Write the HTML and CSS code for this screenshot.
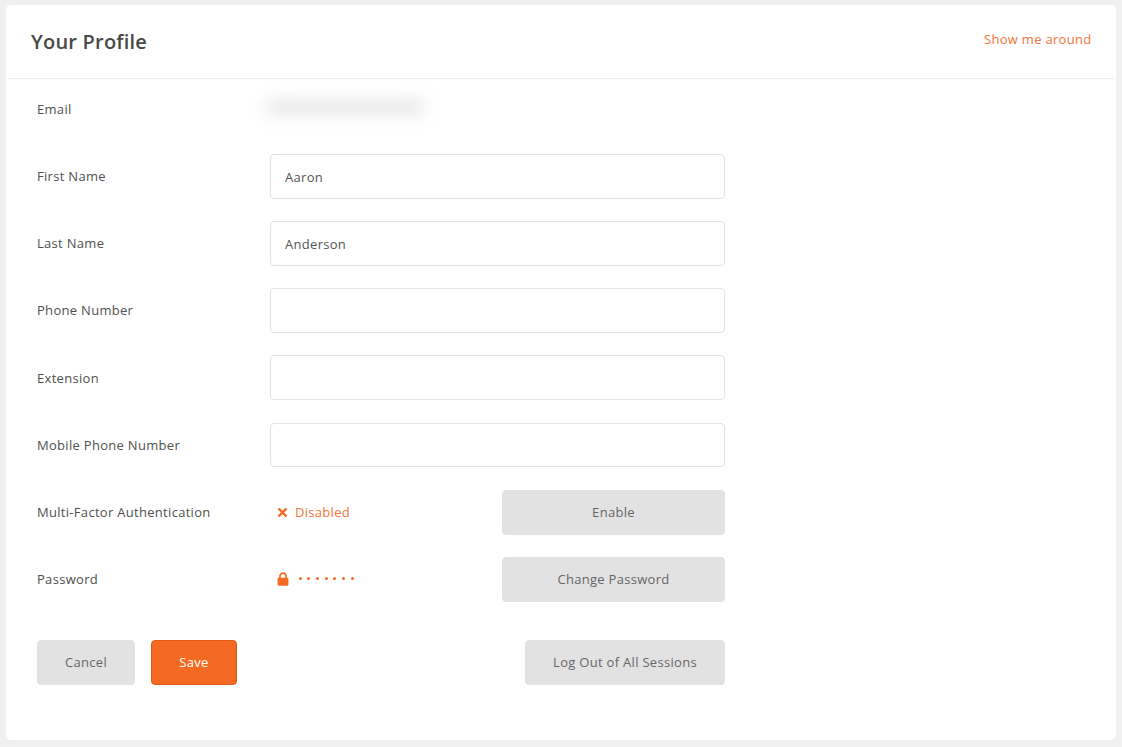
FILE: index.html
```
<!DOCTYPE html>
<html lang="en">
<head>
<meta charset="utf-8">
<title>Your Profile</title>
<link rel="stylesheet" href="styles.css">
</head>
<body>
<main class="card">
  <header class="head">
    <h1 class="title">Your Profile</h1>
    <a class="tour" href="#">Show me around</a>
  </header>
  <form class="form">
    <div class="row email-row">
      <span class="label">Email</span>
      <span class="blurred"></span>
    </div>
    <div class="row">
      <label class="label">First Name</label>
      <input class="input" type="text" value="Aaron">
    </div>
    <div class="row">
      <label class="label">Last Name</label>
      <input class="input" type="text" value="Anderson">
    </div>
    <div class="row">
      <label class="label">Phone Number</label>
      <input class="input" type="text">
    </div>
    <div class="row">
      <label class="label">Extension</label>
      <input class="input" type="text">
    </div>
    <div class="row">
      <label class="label">Mobile Phone Number</label>
      <input class="input" type="text">
    </div>
    <div class="row">
      <span class="label">Multi-Factor Authentication</span>
      <div class="split">
        <span class="status">
          <svg class="icon-x" width="11" height="11" viewBox="0 0 11 11" aria-hidden="true"><path d="M1.5 1.5l8 8M9.5 1.5l-8 8" stroke="#f46a22" stroke-width="2.4" fill="none"/></svg>
          Disabled
        </span>
        <button class="btn btn-side" type="button">Enable</button>
      </div>
    </div>
    <div class="row">
      <span class="label">Password</span>
      <div class="split">
        <span class="status status-lock">
          <svg class="icon-lock" width="12" height="14" viewBox="0 0 12 14" aria-hidden="true"><path d="M3 6.5V4.2a3 3 0 0 1 6 0v2.3" stroke="#f46a22" stroke-width="1.7" fill="none"/><rect x="0.6" y="5.8" width="10.8" height="8" rx="1.2" fill="#f46a22"/></svg>
          <span class="dots"><i></i><i></i><i></i><i></i><i></i><i></i><i></i></span>
        </span>
        <button class="btn btn-side" type="button">Change Password</button>
      </div>
    </div>
    <div class="actions">
      <div class="actions-left">
        <button class="btn btn-cancel" type="button">Cancel</button>
        <button class="btn btn-save" type="button">Save</button>
      </div>
      <button class="btn btn-logout" type="button">Log Out of All Sessions</button>
    </div>
  </form>
</main>
</body>
</html>
```
FILE: styles.css
```
* { box-sizing: border-box; }
html, body { height: 100%; }
body {
  margin: 0;
  padding: 5px 6px 7px;
  background: #f0f0f0;
  font-family: "Open Sans", "Liberation Sans", sans-serif;
  font-size: 13px;
  color: #555;
  letter-spacing: 0.3px;
}
.card {
  height: 735px;
  background: #fff;
  border-radius: 5px;
  padding: 0 2px 0 1px;
}
.head {
  height: 74px;
  display: flex;
  align-items: flex-start;
  justify-content: space-between;
  padding: 0 22.5px 0 24px;
  border-bottom: 1px solid #ececec;
}
.title {
  margin: 22px 0 0;
  font-size: 20px;
  line-height: 29px;
  font-weight: 600;
  color: #484848;
  letter-spacing: 0.2px;
}
.tour {
  margin-top: 25px;
  line-height: 18px;
  color: #f4733a;
  text-decoration: none;
}
.form {
  padding: 0 0 0 30px;
  width: 718px;
}
.row {
  display: grid;
  grid-template-columns: 233px 455px;
  align-items: center;
  height: 44.7px;
  margin-bottom: 22.42px;
}
.email-row {
  height: 60px;
  margin-bottom: 15.14px;
  align-items: start;
}
.email-row .label { margin-top: 21px; }
.label { line-height: 18px; color: #505050; margin-top: -0.5px; }
.blurred {
  display: block;
  width: 160px;
  height: 16px;
  margin: 20px 0 0 -5px;
  background: #e8e8e8;
  border-radius: 8px;
  filter: blur(8px);
}
.input {
  width: 455px;
  height: 44.7px;
  padding: 1px 14px 0;
  border: 1px solid #e2e2e2;
  border-radius: 4px;
  background: #fff;
  font: inherit;
  letter-spacing: inherit;
  color: #555;
  outline: none;
}
.split {
  display: flex;
  align-items: center;
  justify-content: space-between;
}
.status {
  display: flex;
  align-items: center;
  padding-left: 7px;
  color: #f4733a;
  line-height: 18px;
}
.status-lock { margin-top: -1px; }
.icon-x { margin-right: 7px; }
.icon-lock { margin-right: 9.5px; }
.dots { display: flex; gap: 5.7px; }
.dots i { width: 3px; height: 3px; border-radius: 50%; background: #f46a22; }
.btn {
  height: 45px;
  padding: 0 0 1px;
  border: 1px solid #e2e2e2;
  border-radius: 4px;
  background: #e2e2e2;
  font: inherit;
  letter-spacing: inherit;
  color: #666;
}
.btn-side { width: 223px; }
.actions {
  display: flex;
  justify-content: space-between;
  width: 688px;
  margin-top: 38.3px;
}
.actions-left { display: flex; gap: 16px; }
.btn-cancel { width: 98px; }
.btn-save {
  width: 86px;
  background: #f46a22;
  border-color: #e25a14;
  color: #fff;
}
.btn-logout { width: 200px; }
```
